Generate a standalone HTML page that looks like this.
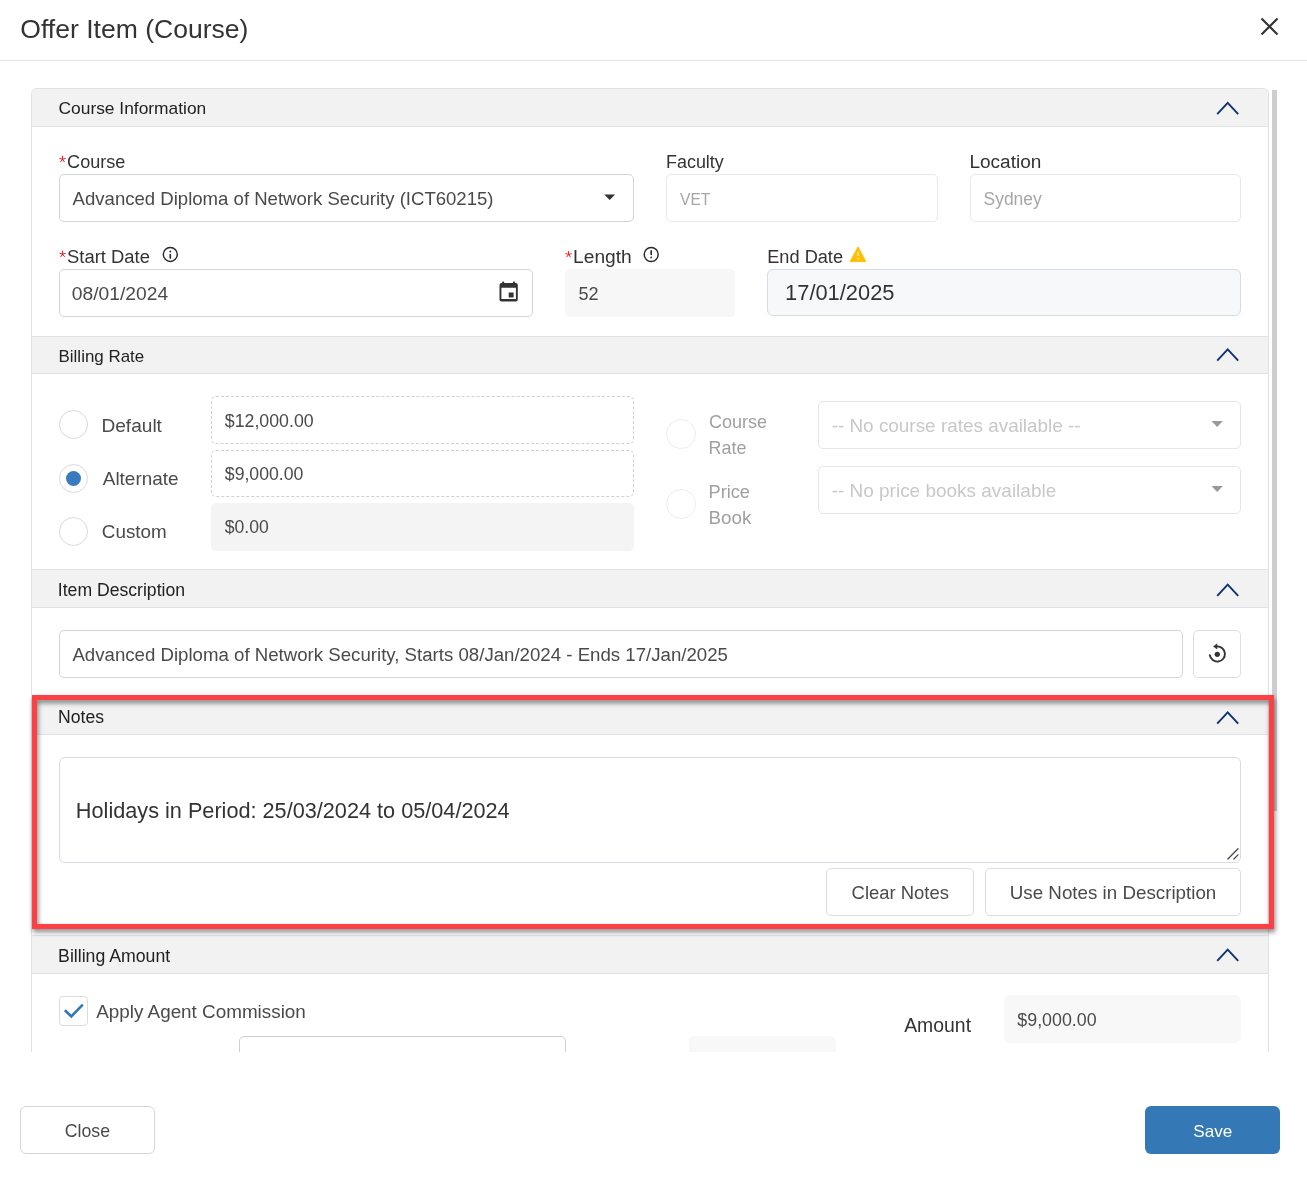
<!DOCTYPE html>
<html><head><meta charset="utf-8"><title>Offer Item (Course)</title>
<style>
html,body{margin:0;padding:0;background:#fff;width:1307px;height:1180px;overflow:hidden;position:relative;font-family:"Liberation Sans",sans-serif}
svg{position:absolute;left:0;top:0;will-change:transform}
</style></head><body>
<div style="position:absolute;left:0px;top:60px;width:1307px;height:1px;box-sizing:border-box;background:#e5e5e5"></div>
<div style="position:absolute;left:31px;top:88px;width:1238px;height:964px;box-sizing:border-box;border:1px solid #dfe3e8;border-bottom:none;border-radius:6px 6px 0 0"></div>
<div style="position:absolute;left:32px;top:89px;width:1236px;height:38px;box-sizing:border-box;background:#f2f2f2;border-bottom:1px solid #dfe3e8;border-radius:5px 5px 0 0"></div>
<div style="position:absolute;left:32px;top:336px;width:1236px;height:38px;box-sizing:border-box;background:#f2f2f2;border-top:1px solid #dfe3e8;border-bottom:1px solid #dfe3e8"></div>
<div style="position:absolute;left:32px;top:569px;width:1236px;height:39px;box-sizing:border-box;background:#f2f2f2;border-top:1px solid #dfe3e8;border-bottom:1px solid #dfe3e8"></div>
<div style="position:absolute;left:32px;top:697px;width:1236px;height:38px;box-sizing:border-box;background:#f2f2f2;border-top:1px solid #dfe3e8;border-bottom:1px solid #dfe3e8"></div>
<div style="position:absolute;left:32px;top:935px;width:1236px;height:39px;box-sizing:border-box;background:#f2f2f2;border-top:1px solid #dfe3e8;border-bottom:1px solid #dfe3e8"></div>
<div style="position:absolute;left:59px;top:174px;width:575px;height:48px;box-sizing:border-box;border:1px solid #d4d4d4;border-radius:5px;background:#fff"></div>
<div style="position:absolute;left:666px;top:174px;width:272px;height:48px;box-sizing:border-box;border:1px solid #e9e9e9;border-radius:5px;background:#fff"></div>
<div style="position:absolute;left:970px;top:174px;width:271px;height:48px;box-sizing:border-box;border:1px solid #e9e9e9;border-radius:5px;background:#fff"></div>
<div style="position:absolute;left:59px;top:269px;width:474px;height:48px;box-sizing:border-box;border:1px solid #d4d4d4;border-radius:5px;background:#fff"></div>
<div style="position:absolute;left:565px;top:269px;width:170px;height:48px;box-sizing:border-box;border-radius:5px;background:#f7f7f7"></div>
<div style="position:absolute;left:767px;top:269px;width:474px;height:47px;box-sizing:border-box;border:1px solid #d6dce3;border-radius:6px;background:#f7f8f9"></div>
<div style="position:absolute;left:211px;top:396px;width:423px;height:48px;box-sizing:border-box;border:1px dashed #d0d0d0;border-radius:5px;background:#fff"></div>
<div style="position:absolute;left:211px;top:450px;width:423px;height:47px;box-sizing:border-box;border:1px dashed #d0d0d0;border-radius:5px;background:#fff"></div>
<div style="position:absolute;left:211px;top:503px;width:423px;height:48px;box-sizing:border-box;border-radius:5px;background:#f4f4f4"></div>
<div style="position:absolute;left:818px;top:401px;width:423px;height:48px;box-sizing:border-box;border:1px solid #e6e6e6;border-radius:5px;background:#fff"></div>
<div style="position:absolute;left:818px;top:466px;width:423px;height:48px;box-sizing:border-box;border:1px solid #e6e6e6;border-radius:5px;background:#fff"></div>
<div style="position:absolute;left:59px;top:630px;width:1124px;height:48px;box-sizing:border-box;border:1px solid #d4d4d4;border-radius:5px;background:#fff"></div>
<div style="position:absolute;left:1193px;top:630px;width:48px;height:48px;box-sizing:border-box;border:1px solid #dedede;border-radius:5px;background:#fff"></div>
<div style="position:absolute;left:59px;top:757px;width:1182px;height:106px;box-sizing:border-box;border:1px solid #d6dce3;border-radius:6px;background:#fff"></div>
<div style="position:absolute;left:826px;top:868px;width:148px;height:48px;box-sizing:border-box;border:1px solid #dcdcdc;border-radius:5px;background:#fff"></div>
<div style="position:absolute;left:985px;top:868px;width:256px;height:48px;box-sizing:border-box;border:1px solid #dcdcdc;border-radius:5px;background:#fff"></div>
<div style="position:absolute;left:59px;top:996px;width:29px;height:30px;box-sizing:border-box;border:1px solid #dcdcdc;border-radius:4px;background:#fff"></div>
<div style="position:absolute;left:239px;top:1036px;width:327px;height:24px;box-sizing:border-box;border:1px solid #cfcfcf;border-radius:5px;background:#fff"></div>
<div style="position:absolute;left:689px;top:1036px;width:147px;height:24px;box-sizing:border-box;border-radius:5px;background:#f8f8f8"></div>
<div style="position:absolute;left:1004px;top:995px;width:237px;height:48px;box-sizing:border-box;border-radius:6px;background:#f8f8f8"></div>
<div style="position:absolute;left:0px;top:1052px;width:1307px;height:48px;box-sizing:border-box;background:#fff"></div>
<div style="position:absolute;left:59.0px;top:409.8px;width:29.0px;height:29.0px;box-sizing:border-box;border:1px solid #d9d9d9;border-radius:50%;background:#fff"></div>
<div style="position:absolute;left:59.0px;top:463.5px;width:29.0px;height:29.0px;box-sizing:border-box;border:1px solid #d9d9d9;border-radius:50%;background:#fff"></div>
<div style="position:absolute;left:59.0px;top:516.5px;width:29.0px;height:29.0px;box-sizing:border-box;border:1px solid #d9d9d9;border-radius:50%;background:#fff"></div>
<div style="position:absolute;left:66px;top:470.5px;width:15px;height:15px;border-radius:50%;background:#3a7bbf"></div>
<div style="position:absolute;left:666px;top:419px;width:30px;height:30px;box-sizing:border-box;border:1px solid #ececec;border-radius:50%;background:#fff"></div>
<div style="position:absolute;left:666px;top:489px;width:30px;height:30px;box-sizing:border-box;border:1px solid #ececec;border-radius:50%;background:#fff"></div>
<div style="position:absolute;left:1272px;top:90px;width:5px;height:721px;box-sizing:border-box;background:#cdcdcd"></div>
<div style="position:absolute;left:20px;top:1106px;width:135px;height:48px;box-sizing:border-box;border:1px solid #d6d6d6;border-radius:6px;background:#fff"></div>
<div style="position:absolute;left:1145px;top:1106px;width:135px;height:48px;box-sizing:border-box;border-radius:6px;background:#3478b5"></div>
<svg width="1307" height="1180" viewBox="0 0 1307 1180" style="font-family:'Liberation Sans',sans-serif">
<path d="M1261.5 18.5 L1277.5 34.5 M1277.5 18.5 L1261.5 34.5" stroke="#333" stroke-width="2.2" fill="none"/>
<path d="M1217.2 114.2 L1227.7 102.9 L1238.2 114.2" stroke="#0f3370" stroke-width="1.9" fill="none"/>
<path d="M1217.2 360.7 L1227.7 349.4 L1238.2 360.7" stroke="#0f3370" stroke-width="1.9" fill="none"/>
<path d="M1217.2 595.9 L1227.7 584.6 L1238.2 595.9" stroke="#0f3370" stroke-width="1.9" fill="none"/>
<path d="M1217.2 723.7 L1227.7 712.4 L1238.2 723.7" stroke="#0f3370" stroke-width="1.9" fill="none"/>
<path d="M1217.2 960.9 L1227.7 949.6 L1238.2 960.9" stroke="#0f3370" stroke-width="1.9" fill="none"/>
<path d="M604.3 194.6 L615.1 194.6 L609.7 200.1 Z" fill="#333"/>
<path d="M1211.5 421 L1222.8 421 L1217.2 427 Z" fill="#999"/>
<path d="M1211.5 486 L1222.8 486 L1217.2 492 Z" fill="#999"/>
<path d="M499.5 284.9 a2 2 0 0 1 2 -2 h14.3 a2 2 0 0 1 2 2 v14.5 a2 2 0 0 1 -2 2 h-14.3 a2 2 0 0 1 -2 -2 z M501.4 287.8 v11.3 h14.5 v-11.3 z M508.7 292.5 h4.9 v4.9 h-4.9 z" fill="#333" fill-rule="evenodd"/><rect x="502.1" y="281.6" width="2.1" height="2" rx="0.8" fill="#333"/><rect x="512.9" y="281.6" width="2.1" height="2" rx="0.8" fill="#333"/>
<circle cx="170.3" cy="254.4" r="7.0" stroke="#25292d" stroke-width="1.45" fill="none"/><path d="M170.3 254.6 v3.6" stroke="#25292d" stroke-width="1.6" stroke-linecap="round"/><circle cx="170.3" cy="251.5" r="0.95" fill="#25292d"/>
<circle cx="651.2" cy="254.5" r="7.0" stroke="#25292d" stroke-width="1.45" fill="none"/><path d="M651.2 250.9 v3.6" stroke="#25292d" stroke-width="1.6" stroke-linecap="round"/><circle cx="651.2" cy="257.4" r="0.95" fill="#25292d"/>
<path d="M858 247.4 L865.5 261.3 L850.5 261.3 Z" fill="#fec007" stroke="#fec007" stroke-width="1.3" stroke-linejoin="round"/><rect x="857.1" y="252.4" width="1.8" height="3.4" fill="#ffe7a0"/><rect x="857.1" y="258.2" width="1.8" height="1.4" fill="#ffe7a0"/>
<path d="M1209.8 655.2 A7.6 7.6 0 1 0 1216.9 646.4" stroke="#333" stroke-width="1.9" fill="none" stroke-linecap="round"/><path d="M1213.5 646.4 L1217 643.9 L1217 648.9 Z" fill="#333" stroke="#333" stroke-width="0.6" stroke-linejoin="round"/><circle cx="1217.3" cy="654.3" r="2.65" fill="#333"/>
<path d="M1227.9 859 L1238 848.8 M1233.9 859 L1238 854.9" stroke="#4a4a4a" stroke-width="1.3" fill="none" stroke-linecap="round"/>
<path d="M64.9 1010.2 L71.3 1016.4 L82.8 1004.6" stroke="#2f77b8" stroke-width="2.6" fill="none"/>
<text x="20.34" y="37.50" font-size="26.54" fill="#333">Offer Item (Course)</text>
<text x="58.53" y="114.10" font-size="17.39" fill="#222">Course Information</text>
<text x="67.10" y="168.00" font-size="18.07" fill="#333">Course</text>
<text x="72.60" y="204.80" font-size="18.57" fill="#4a4a4a">Advanced Diploma of Network Security (ICT60215)</text>
<text x="666.07" y="168.00" font-size="17.91" fill="#333">Faculty</text>
<text x="680.00" y="205.00" font-size="15.59" fill="#a6a6a6">VET</text>
<text x="969.48" y="168.00" font-size="18.99" fill="#333">Location</text>
<text x="983.50" y="205.00" font-size="17.48" fill="#a6a6a6">Sydney</text>
<text x="67.06" y="262.60" font-size="18.41" fill="#333">Start Date</text>
<text x="71.82" y="299.90" font-size="19.24" fill="#4a4a4a">08/01/2024</text>
<text x="573.06" y="262.80" font-size="19.20" fill="#333">Length</text>
<text x="578.47" y="300.20" font-size="18.13" fill="#4a4a4a">52</text>
<text x="767.25" y="262.60" font-size="18.18" fill="#333">End Date</text>
<text x="785.07" y="300.10" font-size="21.86" fill="#333">17/01/2025</text>
<text x="58.55" y="362.00" font-size="16.94" fill="#222">Billing Rate</text>
<text x="101.47" y="432.20" font-size="19.09" fill="#4a4a4a">Default</text>
<text x="102.80" y="485.10" font-size="18.91" fill="#4a4a4a">Alternate</text>
<text x="101.86" y="537.90" font-size="18.82" fill="#4a4a4a">Custom</text>
<text x="224.82" y="426.70" font-size="17.75" fill="#4a4a4a">$12,000.00</text>
<text x="224.82" y="479.80" font-size="17.67" fill="#4a4a4a">$9,000.00</text>
<text x="224.82" y="532.80" font-size="17.59" fill="#4a4a4a">$0.00</text>
<text x="709.00" y="427.90" font-size="18.04" fill="#a0a0a0">Course</text>
<text x="708.57" y="454.00" font-size="17.93" fill="#a0a0a0">Rate</text>
<text x="708.55" y="497.90" font-size="18.18" fill="#a0a0a0">Price</text>
<text x="708.49" y="524.00" font-size="18.87" fill="#a0a0a0">Book</text>
<text x="831.64" y="431.80" font-size="18.91" fill="#c8c8c8">-- No course rates available --</text>
<text x="831.64" y="496.70" font-size="18.98" fill="#c8c8c8">-- No price books available</text>
<text x="57.81" y="596.00" font-size="17.62" fill="#222">Item Description</text>
<text x="72.40" y="660.60" font-size="18.65" fill="#4a4a4a">Advanced Diploma of Network Security, Starts 08/Jan/2024 - Ends 17/Jan/2025</text>
<text x="58.09" y="723.00" font-size="17.62" fill="#222">Notes</text>
<text x="75.87" y="817.50" font-size="21.68" fill="#333">Holidays in Period: 25/03/2024 to 05/04/2024</text>
<text x="851.58" y="898.90" font-size="18.46" fill="#4a4a4a">Clear Notes</text>
<text x="1009.79" y="898.90" font-size="18.77" fill="#4a4a4a">Use Notes in Description</text>
<text x="58.08" y="961.90" font-size="17.71" fill="#222">Billing Amount</text>
<text x="96.20" y="1017.90" font-size="18.86" fill="#4a4a4a">Apply Agent Commission</text>
<text x="904.20" y="1032.40" font-size="19.40" fill="#333">Amount</text>
<text x="1017.32" y="1025.90" font-size="17.83" fill="#4a4a4a">$9,000.00</text>
<text x="64.82" y="1136.90" font-size="17.69" fill="#4a4a4a">Close</text>
<text x="1193.22" y="1136.70" font-size="17.11" fill="#fff">Save</text>
<path d="M62.5 159.3 L62.5 156.3 M62.5 159.3 L59.8 158.45000000000002 M62.5 159.3 L65.2 158.45000000000002 M62.5 159.3 L60.7 161.70000000000002 M62.5 159.3 L64.3 161.70000000000002" stroke="#f0141e" stroke-width="1.0" stroke-linecap="round" fill="none"/>
<path d="M62.6 254.2 L62.6 251.2 M62.6 254.2 L59.9 253.35 M62.6 254.2 L65.3 253.35 M62.6 254.2 L60.800000000000004 256.59999999999997 M62.6 254.2 L64.4 256.59999999999997" stroke="#f0141e" stroke-width="1.0" stroke-linecap="round" fill="none"/>
<path d="M568.6 254.5 L568.6 251.5 M568.6 254.5 L565.9 253.65 M568.6 254.5 L571.3000000000001 253.65 M568.6 254.5 L566.8000000000001 256.9 M568.6 254.5 L570.4 256.9" stroke="#f0141e" stroke-width="1.0" stroke-linecap="round" fill="none"/>
</svg>
<div style="position:absolute;left:32px;top:695px;width:1242px;height:234px;box-sizing:border-box;border:5px solid #fc4043;filter:drop-shadow(1px 3px 2.5px rgba(0,0,0,0.5))"></div>
</body></html>
